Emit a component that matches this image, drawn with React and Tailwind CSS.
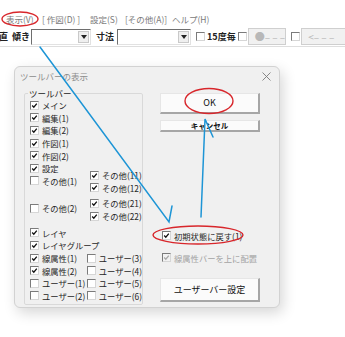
import React from 'react'

const FONT = "font-['Noto_Sans_CJK_JP','Noto_Sans',sans-serif]"

function Box({ checked, disabled }) {
    return (
        <span className={`w-[9px] h-[9px] shrink-0 flex items-center justify-center border border-t-[#7b7b7b] border-l-[#7b7b7b] border-r-[#d6d6d6] border-b-[#d6d6d6] ${disabled ? 'bg-[#f2f2f2]' : 'bg-white'}`}>
            {checked && (
                <svg width="7" height="7" viewBox="0 0 7 7">
                    <path d="M1.2 3.5 L2.8 5.2 L5.8 1.6" fill="none" stroke={disabled ? '#a8a8a8' : '#111'} strokeWidth="1.3" />
                </svg>
            )}
        </span>
    )
}

function Item({ label, checked, disabled, className = '' }) {
    return (
        <div className={`h-[12.6px] flex items-center gap-[3px] ${className}`}>
            <Box checked={checked} disabled={disabled} />
            <span className={`leading-none whitespace-nowrap ${disabled ? 'text-[#a3a3a3]' : 'text-[#262626]'}`}>{label}</span>
        </div>
    )
}

function Combo({ width }) {
    return (
        <div className={`h-[16px] ${width} flex bg-white border border-t-[#6e6e6e] border-l-[#6e6e6e] border-r-[#e2e2e2] border-b-[#e2e2e2]`}>
            <div className="flex-1" />
            <div className="w-[11px] my-[1px] mr-[1px] bg-[#efefef] border border-[#c9c9c9] flex items-center justify-center">
                <svg width="6" height="4" viewBox="0 0 6 4"><path d="M0 0 H6 L3 4 Z" fill="#222" /></svg>
            </div>
        </div>
    )
}

function Button({ children, className = '' }) {
    return (
        <div className={`w-[100px] flex items-center justify-center bg-[#fbfbfb] border-t border-l border-t-[#e6e6e6] border-l-[#e6e6e6] border-r-2 border-b-2 border-r-[#a6a6a6] border-b-[#a6a6a6] text-[#111] ${className}`}>
            {children}
        </div>
    )
}

export default function App() {
    return (
        <div className={`relative w-[345px] h-[337px] overflow-hidden bg-white ${FONT}`}>
            <div className="h-[12px]" />

            {/* Menu */}
            <div className="h-[15px] flex items-center text-[8.5px] text-[#7a7a7a] leading-none">
                <span className="ml-[6px] w-[36px]">表示(V)</span>
                <span className="w-[48px]">[ 作図(D) ]</span>
                <span className="w-[35px]">設定(S)</span>
                <span className="w-[47px]">[その他(A)]</span>
                <span>ヘルプ(H)</span>
            </div>

            {/* Toolbar */}
            <div className="h-[20px] flex items-center text-[9px] font-bold text-[#222] leading-none border-b border-[#dedede] whitespace-nowrap">
                <span className="-ml-[1px] w-[10px]">直</span>
                <span className="ml-[4px] w-[16px]">傾き</span>
                <div className="ml-[3px]"><Combo width="w-[60px]" /></div>
                <span className="ml-[5px] w-[16px]">寸法</span>
                <div className="ml-[5px]"><Combo width="w-[74px]" /></div>
                <div className="ml-[5px]"><Box /></div>
                <span className="ml-[2px] w-[29px]">15度毎</span>
                <div className="ml-[2px]"><Box /></div>
                <div className="ml-[1px] w-[41px] h-[17px] bg-[#f1f1f1] border border-[#cfcfcf] flex items-center pl-[6px] text-[#b8b8b8] font-normal text-[10px]">●– – –</div>
                <div className="ml-[5px]"><Box /></div>
                <div className="ml-[1px] w-[48px] shrink-0 h-[17px] bg-[#f1f1f1] border border-[#cfcfcf] flex items-center pl-[6px] text-[#b8b8b8] font-normal text-[10px]">&lt;– – –</div>
            </div>

            {/* Dialog */}
            <div className="ml-[14px] mt-[19px] w-[266px] h-[242px] rounded-[6px] bg-[#f0f0f0] border border-[#d2d2d2] shadow-[3px_5px_14px_rgba(0,0,0,0.16)] overflow-hidden text-[8.3px]">
                <div className="h-[26px] flex items-start justify-between pt-[3px] pl-[5px] pr-[8px]">
                    <span className="text-[#8c8c8c] leading-[12px] text-[8.5px]">ツールバーの表示</span>
                    <svg width="9" height="9" viewBox="0 0 9 9" className="mt-[2px]">
                        <path d="M0.5 0.5 L8.5 8.5 M8.5 0.5 L0.5 8.5" stroke="#7a7a7a" strokeWidth="0.9" />
                    </svg>
                </div>

                <div className="flex items-start">
                    {/* Group box */}
                    <div className="relative ml-[9px] w-[119px] h-[212px] border border-[#d9d9d9] rounded-[2px] pt-[5px] pl-[5px]">
                        <span className="absolute -top-[6px] left-[3px] px-[1px] bg-[#f0f0f0] leading-[11px] text-[#1a1a1a] text-[8.5px]">ツールバー</span>
                        <div className="flex">
                            <div className="w-[60px]">
                                <Item label="メイン" checked />
                                <Item label="編集(1)" checked />
                                <Item label="編集(2)" checked />
                                <Item label="作図(1)" checked />
                                <Item label="作図(2)" checked />
                                <Item label="設定" checked />
                                <Item label="その他(1)" />
                                <Item label="その他(2)" className="mt-[14.8px]" />
                            </div>
                            <div className="mt-[70px]">
                                <Item label="その他(11)" checked />
                                <Item label="その他(12)" checked />
                                <Item label="その他(21)" checked className="mt-[3px]" />
                                <Item label="その他(22)" checked />
                            </div>
                        </div>
                        <Item label="レイヤ" checked className="mt-[4.3px]" />
                        <Item label="レイヤグループ" checked />
                        <div className="flex">
                            <div className="w-[60px]">
                                <Item label="線属性(1)" checked />
                                <Item label="線属性(2)" checked />
                                <Item label="ユーザー(1)" />
                                <Item label="ユーザー(2)" />
                            </div>
                            <div>
                                <Item label="ユーザー(3)" />
                                <Item label="ユーザー(4)" />
                                <Item label="ユーザー(5)" />
                                <Item label="ユーザー(6)" />
                            </div>
                        </div>
                    </div>

                    {/* Right column */}
                    <div className="ml-[17px] flex flex-col">
                        <Button className="h-[21px] text-[9px]">OK</Button>
                        <Button className="mt-[6px] h-[12px] text-[7.5px] font-bold leading-none">キャンセル</Button>
                        <Item label="初期状態に戻す(1)" checked className="mt-[97.7px] pl-[2px]" />
                        <Item label="線属性バーを上に配置" checked disabled className="mt-[9.4px] pl-[2px]" />
                        <Button className="mt-[13.7px] h-[24px] text-[9px]">ユーザーバー設定</Button>
                    </div>
                </div>
            </div>

            {/* Annotations */}
            <svg className="absolute inset-0 pointer-events-none" width="345" height="337" viewBox="0 0 345 337">
                <g fill="none" stroke="#d8262b" strokeWidth="1.4">
                    <ellipse cx="20" cy="19" rx="18" ry="7" />
                    <ellipse cx="209" cy="101" rx="24" ry="12.5" />
                    <ellipse cx="198" cy="235" rx="45" ry="9" />
                </g>
                <g fill="none" stroke="#1d95d6" strokeWidth="1.5" strokeLinecap="round">
                    <path d="M40 47 L169 222 L172 206" />
                    <path d="M201 217 L205 119 L213 137" />
                </g>
            </svg>
        </div>
    )
}
